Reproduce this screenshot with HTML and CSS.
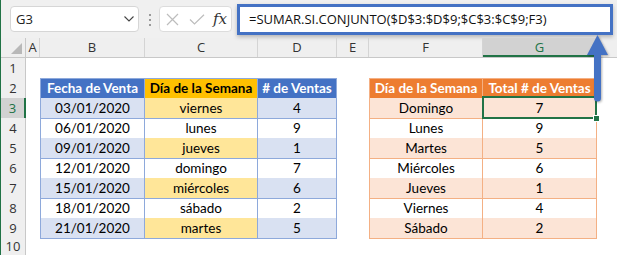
FILE: index.html
```html
<!DOCTYPE html>
<html lang="es">
<head>
    <meta charset="UTF-8">
    <title>SUMAR.SI.CONJUNTO</title>
    <link rel="stylesheet" href="styles.css">
</head>
<body>
<div class="app">
    <div class="toolbar">
        <div class="namebox">
            <span>G3</span>
            <svg width="10" height="6" viewBox="0 0 10 6"><path d="M0.5 0.5 L5 5 L9.5 0.5" fill="none" stroke="#444" stroke-width="1.1"/></svg>
        </div>
        <div class="grip"><i></i><i></i><i></i></div>
        <div class="fxbox">
            <svg width="13" height="13" viewBox="0 0 13 13"><path d="M1 1 L12 12 M12 1 L1 12" stroke="#bdbdbd" stroke-width="1.2"/></svg>
            <svg width="16" height="11" viewBox="0 0 16 11"><path d="M1 5.5 L5.5 10 L15 0.8" fill="none" stroke="#bdbdbd" stroke-width="1.2"/></svg>
            <span class="fx">fx</span>
        </div>
        <div class="formula">=SUMAR.SI.CONJUNTO($D$3:$D$9;$C$3:$C$9;F3)</div>
    </div>

    <div class="sheet">
        <div class="row colhead">
            <div class="corner"><span></span></div>
            <div class="colh">A</div>
            <div class="colh">B</div>
            <div class="colh">C</div>
            <div class="colh">D</div>
            <div class="colh">E</div>
            <div class="colh">F</div>
            <div class="colh sel">G</div>
            <div class="colh last"></div>
        </div>
        <div class="row">
            <div class="rowh">1</div>
            <div></div><div></div><div></div><div></div><div></div><div></div><div></div><div></div>
        </div>
        <div class="row hdr">
            <div class="rowh">2</div>
            <div></div>
            <div class="c t1 first">Fecha de Venta</div>
            <div class="c t1 day">Día de la Semana</div>
            <div class="c t1"># de Ventas</div>
            <div></div>
            <div class="c t2 first">Día de la Semana</div>
            <div class="c t2">Total # de Ventas</div>
            <div></div>
        </div>
        <div class="row band">
            <div class="rowh sel">3</div>
            <div></div>
            <div class="c t1 first">03/01/2020</div>
            <div class="c t1 day">viernes</div>
            <div class="c t1">4</div>
            <div></div>
            <div class="c t2 first">Domingo</div>
            <div class="c t2 active">7<span class="handle"></span></div>
            <div></div>
        </div>
        <div class="row">
            <div class="rowh">4</div>
            <div></div>
            <div class="c t1 first">06/01/2020</div>
            <div class="c t1 day">lunes</div>
            <div class="c t1">9</div>
            <div></div>
            <div class="c t2 first">Lunes</div>
            <div class="c t2">9</div>
            <div></div>
        </div>
        <div class="row band">
            <div class="rowh">5</div>
            <div></div>
            <div class="c t1 first">09/01/2020</div>
            <div class="c t1 day">jueves</div>
            <div class="c t1">1</div>
            <div></div>
            <div class="c t2 first">Martes</div>
            <div class="c t2">5</div>
            <div></div>
        </div>
        <div class="row">
            <div class="rowh">6</div>
            <div></div>
            <div class="c t1 first">12/01/2020</div>
            <div class="c t1 day">domingo</div>
            <div class="c t1">7</div>
            <div></div>
            <div class="c t2 first">Miércoles</div>
            <div class="c t2">6</div>
            <div></div>
        </div>
        <div class="row band">
            <div class="rowh">7</div>
            <div></div>
            <div class="c t1 first">15/01/2020</div>
            <div class="c t1 day">miércoles</div>
            <div class="c t1">6</div>
            <div></div>
            <div class="c t2 first">Jueves</div>
            <div class="c t2">1</div>
            <div></div>
        </div>
        <div class="row">
            <div class="rowh">8</div>
            <div></div>
            <div class="c t1 first">18/01/2020</div>
            <div class="c t1 day">sábado</div>
            <div class="c t1">2</div>
            <div></div>
            <div class="c t2 first">Viernes</div>
            <div class="c t2">4</div>
            <div></div>
        </div>
        <div class="row band">
            <div class="rowh">9</div>
            <div></div>
            <div class="c t1 first">21/01/2020</div>
            <div class="c t1 day">martes</div>
            <div class="c t1">5</div>
            <div></div>
            <div class="c t2 first">Sábado</div>
            <div class="c t2">2</div>
            <div></div>
        </div>
        <div class="row short">
            <div class="rowh">10</div>
            <div></div><div></div><div></div><div></div><div></div><div></div><div></div><div></div>
        </div>
    </div>

    <!-- flecha de G3 a la barra de formulas -->
    <svg class="arrow" width="24" height="72" viewBox="0 0 24 72">
        <line x1="11.5" y1="20" x2="11.5" y2="65" stroke="#4472c4" stroke-width="7" stroke-linecap="round"/>
        <polygon points="11.5,2 22,22 1,22" fill="#4472c4"/>
    </svg>
</div>
</body>
</html>
```

FILE: styles.css
```css
body {
    margin: 0;
    background: #fff;
}
.app {
    position: relative;
    width: 617px;
    height: 255px;
    overflow: hidden;
    box-sizing: border-box;
    border-left: 1px solid #217346;
    background: #fff;
}

/* barra de formulas */
.toolbar {
    display: flex;
    align-items: flex-start;
    height: 38px;
    box-sizing: border-box;
    padding: 4px 0 0 9px;
    background: #f0f0f0;
    font-family: 'Open Sans', sans-serif;
}
.namebox {
    display: flex;
    align-items: center;
    justify-content: space-between;
    width: 129px;
    height: 26px;
    margin-top: 2px;
    padding: 0 4px 0 5px;
    box-sizing: border-box;
    background: #fff;
    border: 1px solid #d6d6d6;
    border-radius: 4px;
    font-size: 13px;
    color: #222;
}
.grip {
    display: flex;
    flex-direction: column;
    gap: 3px;
    margin: 10px 0 0 10px;
}
.grip i {
    display: block;
    width: 2px;
    height: 2px;
    background: #9a9a9a;
}
.fxbox {
    display: flex;
    align-items: center;
    width: 73px;
    height: 26px;
    margin: 2px 0 0 8px;
    padding-left: 6px;
    box-sizing: border-box;
    background: #fff;
    border: 1px solid #dcdcdc;
    border-radius: 4px;
}
.fxbox svg:nth-child(2) {
    margin-left: 10px;
}
.fx {
    margin-left: 8px;
    font-family: 'DejaVu Serif', 'Liberation Serif', serif;
    font-style: italic;
    font-size: 15px;
    color: #333;
}
.formula {
    width: 376px;
    height: 31px;
    margin-left: 5px;
    padding-left: 9px;
    box-sizing: border-box;
    background: #fff;
    border: 3px solid #4472c4;
    box-shadow: 0 2px 4px rgba(0, 0, 0, 0.25);
    font-size: 13px;
    line-height: 24px;
    color: #111;
    white-space: nowrap;
}

/* hoja */
.row {
    display: grid;
    grid-template-columns: 25px 14px 105px 113px 79px 32px 114px 114px 1fr;
    height: 20px;
}
.row.short {
    height: 17px;
}
.colhead {
    background: #efefef;
    border-bottom: 1px solid #c8c8c8;
    box-sizing: border-box;
    font-family: 'Open Sans', sans-serif;
    font-size: 13px;
    color: #333;
}
.corner {
    position: relative;
    border-right: 1px solid #c8c8c8;
}
.corner span {
    position: absolute;
    right: 3px;
    bottom: 3px;
    width: 0;
    height: 0;
    border-left: 11px solid transparent;
    border-bottom: 11px solid #b8b8b8;
}
.colh {
    text-align: center;
    line-height: 19px;
    border-right: 1px solid #d4d4d4;
}
.colh.last {
    border-right: none;
}
.colh.sel {
    background: #d2d2d2;
    color: #217346;
    box-shadow: inset 0 -2px 0 #217346;
}
.rowh {
    background: #efefef;
    border-right: 1px solid #c8c8c8;
    border-bottom: 1px solid #d4d4d4;
    text-align: center;
    line-height: 20px;
    font-family: 'Open Sans', sans-serif;
    font-size: 13px;
    color: #333;
}
.short .rowh {
    line-height: 17px;
    border-bottom: none;
}
.rowh.sel {
    background: #d2d2d2;
    color: #217346;
    border-right: 2px solid #217346;
}

.c {
    box-sizing: border-box;
    text-align: center;
    line-height: 20px;
    font-family: Lato, sans-serif;
    font-size: 13.5px;
    color: #000;
    white-space: nowrap;
    overflow: hidden;
}
.t1 {
    border-right: 1px solid #8ea9db;
    border-bottom: 1px solid #8ea9db;
}
.t1.first {
    border-left: 1px solid #8ea9db;
}
.band .t1 {
    background: #d9e1f2;
}
.band .t1.day {
    background: #ffe699;
}
.hdr .t1 {
    border-top: 1px solid #8ea9db;
    background: #4472c4;
    color: #fff;
    font-weight: bold;
    line-height: 18px;
}
.hdr .t1.day {
    background: #ffc000;
    color: #000;
}
.t2 {
    border-right: 1px solid #f4b084;
    border-bottom: 1px solid #f4b084;
}
.t2.first {
    border-left: 1px solid #f4b084;
}
.band .t2 {
    background: #fce4d6;
}
.hdr .t2 {
    border-top: 1px solid #f4b084;
    background: #ed7d31;
    color: #fff;
    font-weight: bold;
    line-height: 18px;
}
.active {
    position: relative;
    overflow: visible;
}
.active::after {
    content: "";
    position: absolute;
    top: -2px;
    left: -1px;
    right: -1px;
    bottom: -1px;
    border: 2px solid #217346;
}
.handle {
    position: absolute;
    right: -4px;
    bottom: -4px;
    width: 5px;
    height: 5px;
    background: #217346;
    border: 1px solid #fff;
    z-index: 2;
}

.arrow {
    position: absolute;
    left: 585px;
    top: 33px;
    filter: drop-shadow(1px 1px 1px rgba(0, 0, 0, 0.3));
}
```
